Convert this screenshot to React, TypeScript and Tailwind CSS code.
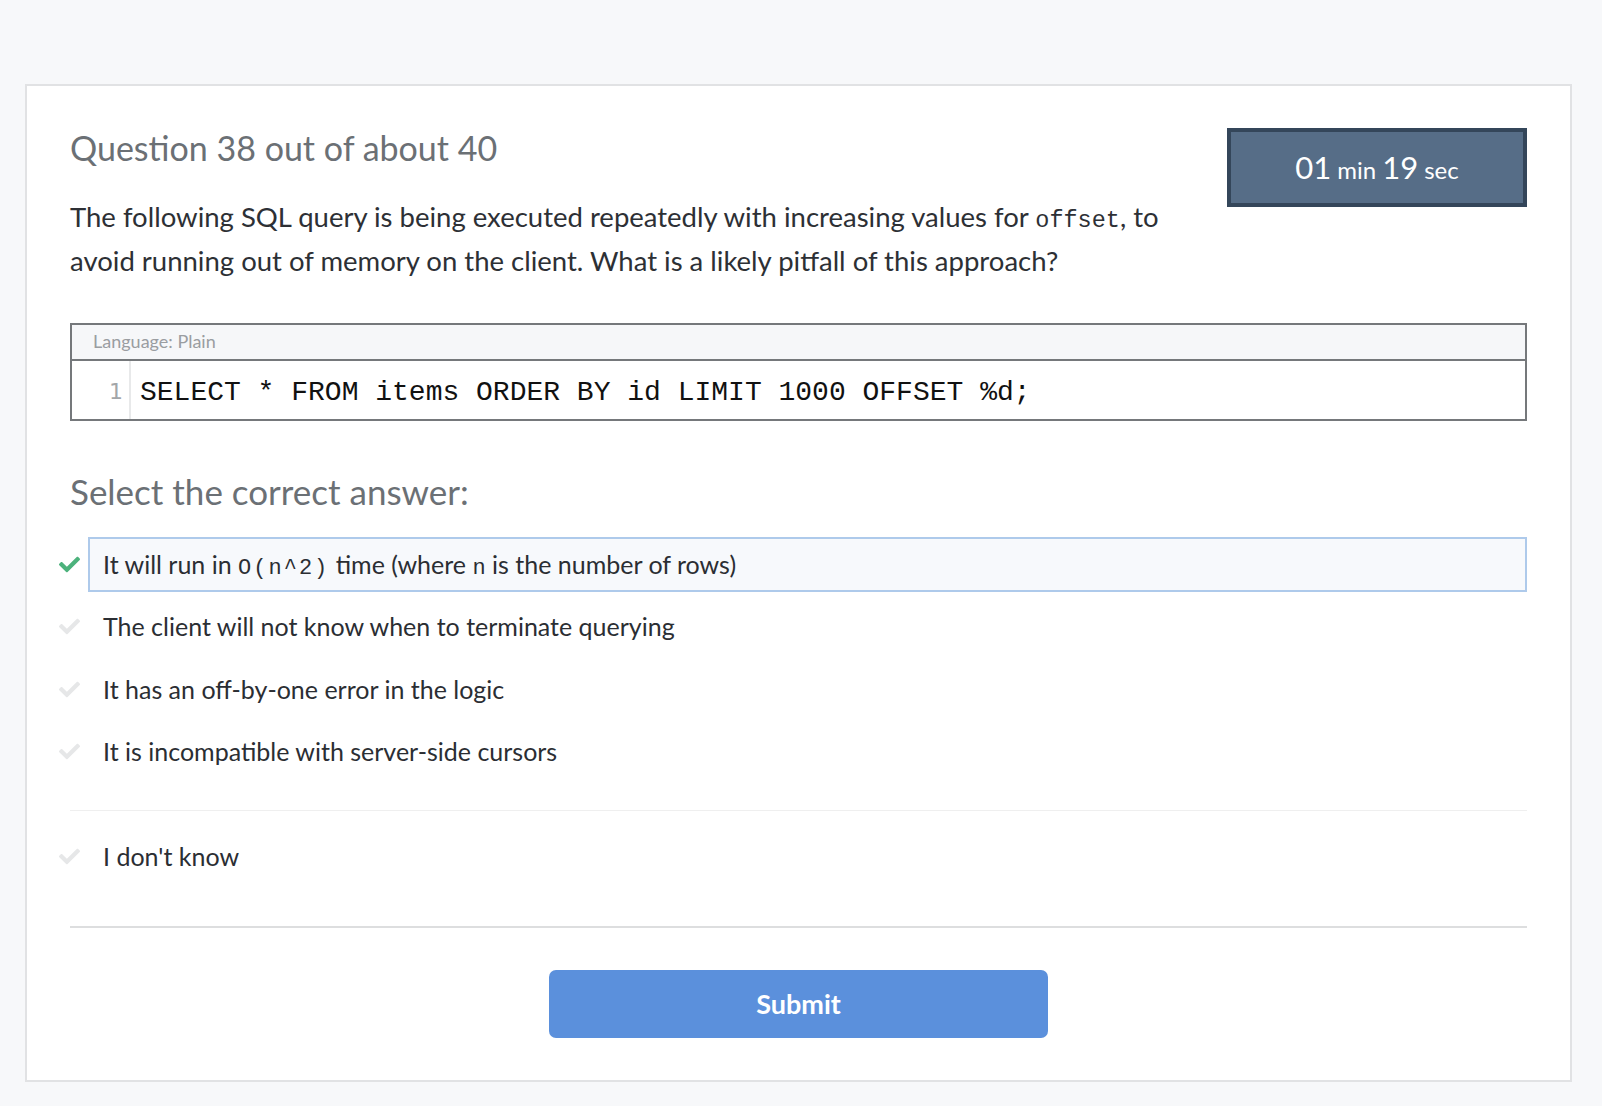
import { FaCheck } from 'react-icons/fa';

const OPTIONS = [
  'The client will not know when to terminate querying',
  'It has an off-by-one error in the logic',
  'It is incompatible with server-side cursors',
];

const mono = "font-['Liberation_Mono',monospace]";

function OptionRow({ selected, children }: { selected?: boolean; children: React.ReactNode }) {
  return (
    <div className="flex items-center gap-[8px] ml-[-11px]">
      <FaCheck
        size={21}
        className={selected ? 'text-[#4cb27c] shrink-0' : 'text-[#e6e7e8] shrink-0'}
      />
      <div
        className={`flex-1 h-[55px] flex items-center px-[13px] border-2 text-[25px] text-[#2b2e33] ${
          selected ? 'border-[#aecaeb] bg-[#f7f9fc]' : 'border-transparent'
        }`}
      >
        <span className="whitespace-pre">{children}</span>
      </div>
    </div>
  );
}

export default function App() {
  return (
    <div className="min-h-screen bg-[#f7f8fa] pt-[84px] pb-[23px] font-['Lato',sans-serif]">
      <div className="ml-[25px] w-[1547px] border-2 border-[#e1e2e4] bg-white px-[43px] pt-[42px] pb-[42px]">
        {/* Header */}
        <div className="flex justify-between items-start">
          <div className="w-[1125px]">
            <h1 className="text-[34px] leading-[1.2] text-[#6b7075]">Question 38 out of about 40</h1>
            <p className="mt-[26px] text-[27.5px] leading-[44px] text-[#2d3035]">
              The following SQL query is being executed repeatedly with increasing values for{' '}
              <code className={`${mono} text-[23.5px] leading-none`}>offset</code>, to avoid running out of
              memory on the client. What is a likely pitfall of this approach?
            </p>
          </div>
          <div className="w-[300px] h-[79px] border-4 border-[#34465a] bg-[#566d87] text-white flex items-baseline justify-center pt-[20px] gap-[6px]">
            <span className="text-[31px] leading-none">01</span>
            <span className="text-[24px] leading-none">min</span>
            <span className="text-[31px] leading-none">19</span>
            <span className="text-[24px] leading-none">sec</span>
          </div>
        </div>

        {/* Code block */}
        <div className="mt-[40px] border-2 border-[#75787b]">
          <div className="h-[36px] bg-[#f6f7f9] border-b-2 border-[#75787b] flex items-center px-[21px] text-[18px] text-[#9a9da1]">
            Language: Plain
          </div>
          <div className="h-[58px] flex items-stretch bg-white">
            <div className="w-[59px] border-r-2 border-[#e8e9ea] flex items-center justify-end pr-[6px] pt-[4px] text-[22px] text-[#a3a6a9] font-['DejaVu_Sans',sans-serif]">
              1
            </div>
            <div className={`flex items-center pl-[9px] pt-[6px] text-[28px] text-[#111] ${mono}`}>
              SELECT * FROM items ORDER BY id LIMIT 1000 OFFSET %d;
            </div>
          </div>
        </div>

        {/* Answers */}
        <h2 className="mt-[49px] text-[35px] leading-[1.2] text-[#6b7075]">Select the correct answer:</h2>

        <div className="mt-[25px] flex flex-col gap-[7.5px]">
          <OptionRow selected>
            It will run in <code className={`${mono} text-[22px] tracking-[2px] leading-none`}>O(n^2)</code> time
            (where <code className={`${mono} text-[22px] leading-none`}>n</code> is the number of rows)
          </OptionRow>
          {OPTIONS.map((o) => (
            <OptionRow key={o}>{o}</OptionRow>
          ))}
        </div>

        <div className="mt-[31px] border-t border-[#efefef]" />

        <div className="mt-[18px]">
          <OptionRow>I don't know</OptionRow>
        </div>

        <div className="mt-[42px] border-t-2 border-[#dddedf]" />

        <div className="mt-[42px] flex justify-center">
          <button className="w-[499px] h-[68px] rounded-[7px] bg-[#5b90dc] text-white text-[27px] font-bold">
            Submit
          </button>
        </div>
      </div>
    </div>
  );
}
